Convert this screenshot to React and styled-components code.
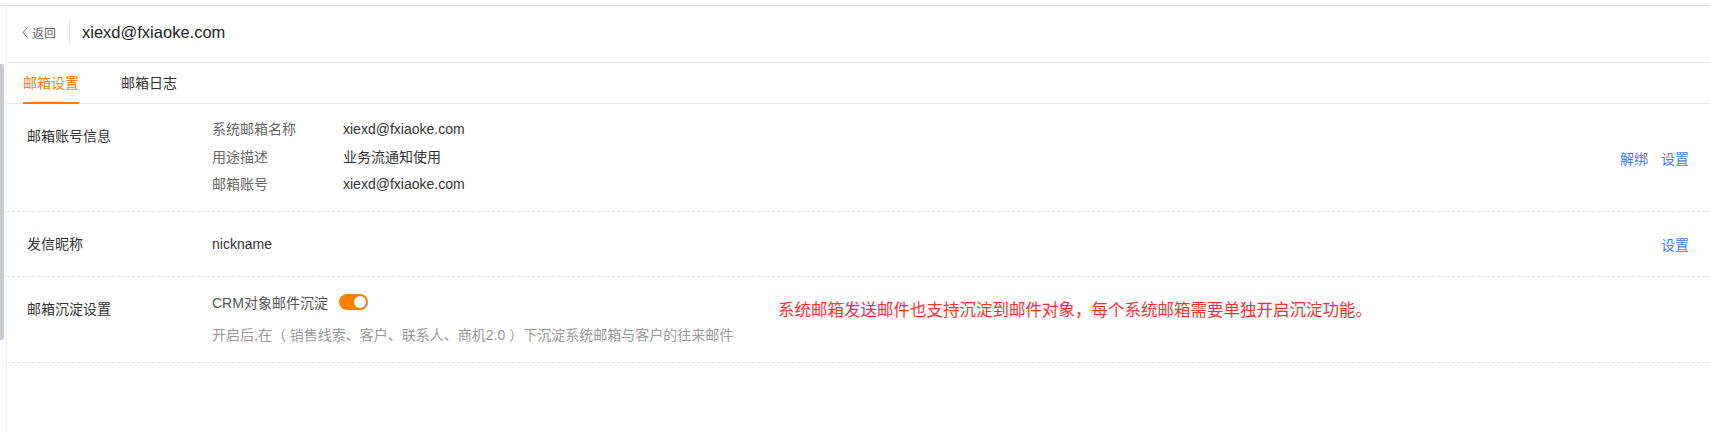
import { Fragment } from 'react';
import styled, { createGlobalStyle } from 'styled-components';

const GlobalStyle = createGlobalStyle`
  body {
    margin: 0;
    background: #fff;
    font-family: "Liberation Sans", "Noto Sans CJK SC", sans-serif;
    color: #333;
  }
`;

const Page = styled.div`
  height: 431px;
  padding-top: 5px;
  box-sizing: border-box;
  overflow: hidden;
`;

const Frame = styled.div`
  display: flex;
  height: 100%;
  border-top: 1px solid #e2e2e2;
`;

const Gutter = styled.div`
  width: 6px;
  flex-shrink: 0;
`;

const Thumb = styled.div`
  margin-top: 58px;
  width: 4px;
  height: 276px;
  background: #c6cbd2;
  border-radius: 0 2px 2px 0;
`;

const Panel = styled.div`
  flex: 1;
  border-left: 1px solid #f3f3f3;
`;

const Header = styled.div`
  display: flex;
  align-items: center;
  height: 57px;
  box-sizing: border-box;
  padding: 0 0 4px 15px;
  border-bottom: 1px solid #e6e6e6;
`;

const Back = styled.div`
  display: flex;
  align-items: center;
  gap: 4px;
  font-size: 12px;
  color: #666;
  cursor: pointer;
`;

const Divider = styled.span`
  width: 1px;
  height: 21px;
  background: #e0e0e0;
  margin: 0 12px 0 13px;
`;

const Title = styled.div`
  font-size: 16.5px;
  color: #222;
`;

const TabBar = styled.div`
  display: flex;
  gap: 42px;
  height: 41px;
  box-sizing: border-box;
  padding-left: 16px;
  border-bottom: 1px solid #e8e8e8;
`;

const Tab = styled.div`
  position: relative;
  line-height: 40px;
  font-size: 14px;
  color: ${p => (p.$active ? '#ff8000' : '#333')};

  &::after {
    content: '';
    display: ${p => (p.$active ? 'block' : 'none')};
    position: absolute;
    left: 0;
    right: 0;
    bottom: -1px;
    height: 2px;
    background: #ff8000;
  }
`;

const Row = styled.div`
  display: flex;
  align-items: flex-start;
  height: ${p => p.$h}px;
  box-sizing: border-box;
  padding: 0 21px 0 20px;
  border-bottom: 1px dashed #e0e0e0;
  font-size: 14px;
`;

const Label = styled.div`
  width: 185px;
  flex-shrink: 0;
  padding-top: 19px;
  line-height: 26px;
  color: #333;
`;

const Body = styled.div`
  padding-top: ${p => p.$top}px;
  line-height: 26px;
  color: #333;
`;

const Fields = styled.div`
  display: grid;
  grid-template-columns: 131px auto;
  padding-top: 12px;
  line-height: 27.5px;
`;

const FieldName = styled.span`
  color: #666;
`;

const FieldValue = styled.span`
  color: #333;
`;

const Actions = styled.div`
  display: flex;
  gap: 13px;
  margin-left: auto;
  align-self: center;
`;

const Link = styled.a`
  color: #3d7eff;
  cursor: pointer;
`;

const Setting = styled.div`
  width: 566px;
  flex-shrink: 0;
  padding-top: 12px;
`;

const SwitchLine = styled.div`
  display: flex;
  align-items: center;
  height: 26px;
  color: #555;
`;

const Switch = styled.span`
  position: relative;
  width: 29px;
  height: 16px;
  margin-left: 11px;
  border-radius: 8px;
  background: #ff8000;

  &::after {
    content: '';
    position: absolute;
    top: 2px;
    right: 2px;
    width: 12px;
    height: 12px;
    border-radius: 50%;
    background: #fff;
  }
`;

const Hint = styled.div`
  margin-top: 7px;
  line-height: 26px;
  color: #999;
`;

const Note = styled.div`
  padding-top: 20px;
  line-height: 26px;
  font-size: 16.5px;
  color: #ff3030;
`;

const fields = [
  ['系统邮箱名称', 'xiexd@fxiaoke.com'],
  ['用途描述', '业务流通知使用'],
  ['邮箱账号', 'xiexd@fxiaoke.com'],
];

export default function App() {
  return (
    <Page>
      <GlobalStyle />
      <Frame>
        <Gutter>
          <Thumb />
        </Gutter>
        <Panel>
          <Header>
            <Back>
              <svg width="6" height="11" viewBox="0 0 6 11">
                <polyline points="5.5,0.5 1,5.5 5.5,10.5" fill="none" stroke="#666" strokeWidth="1" />
              </svg>
              返回
            </Back>
            <Divider />
            <Title>xiexd@fxiaoke.com</Title>
          </Header>

          <TabBar>
            <Tab $active>邮箱设置</Tab>
            <Tab>邮箱日志</Tab>
          </TabBar>

          <Row $h={108}>
            <Label>邮箱账号信息</Label>
            <Fields>
              {fields.map(([name, value]) => (
                <Fragment key={name}>
                  <FieldName>{name}</FieldName>
                  <FieldValue>{value}</FieldValue>
                </Fragment>
              ))}
            </Fields>
            <Actions>
              <Link>解绑</Link>
              <Link>设置</Link>
            </Actions>
          </Row>

          <Row $h={65}>
            <Label>发信昵称</Label>
            <Body $top={19}>nickname</Body>
            <Actions>
              <Link>设置</Link>
            </Actions>
          </Row>

          <Row $h={86}>
            <Label>邮箱沉淀设置</Label>
            <Setting>
              <SwitchLine>
                CRM对象邮件沉淀
                <Switch />
              </SwitchLine>
              <Hint>开启后,在（ 销售线索、客户、联系人、商机2.0 ）下沉淀系统邮箱与客户的往来邮件</Hint>
            </Setting>
            <Note>系统邮箱发送邮件也支持沉淀到邮件对象，每个系统邮箱需要单独开启沉淀功能。</Note>
          </Row>
        </Panel>
      </Frame>
    </Page>
  );
}
